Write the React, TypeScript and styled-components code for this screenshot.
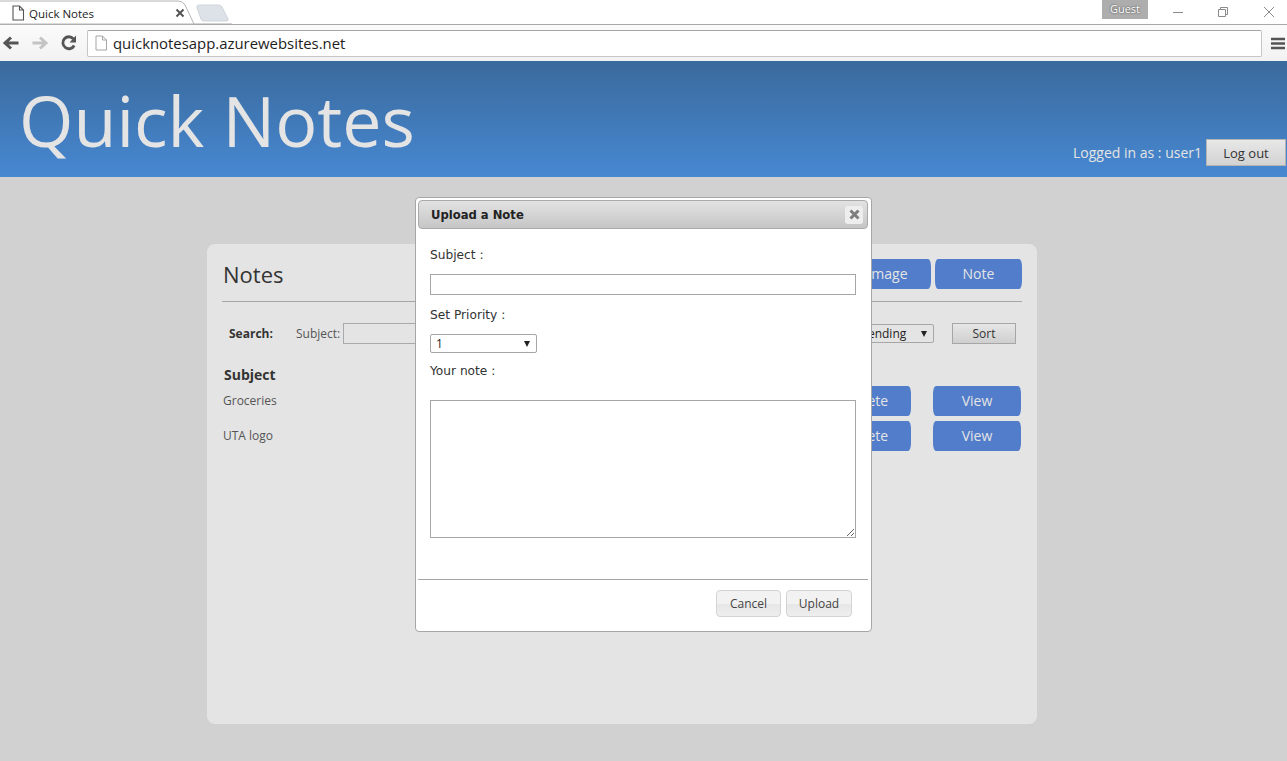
import React from 'react';
import styled, { createGlobalStyle } from 'styled-components';

const GlobalStyle = createGlobalStyle`
  html, body {
    margin: 0;
    padding: 0;
    height: 100%;
    background: #d1d1d1;
    overflow: hidden;
    font-family: "Open Sans", "Liberation Sans", sans-serif;
  }
  * { box-sizing: border-box; }
`;

const App = (): JSX.Element => {
  return (
    <Page>
      <GlobalStyle />
      <BrowserChrome>
        <TabStrip>
          <TabShape width="232" height="25" viewBox="0 0 232 25">
            <path d="M0 24 H194 L185 5 Q183 1 178 1 H0" fill="#fff" stroke="#b4b4b4" />
            <path d="M194 24 H1287" stroke="#a8a8a8" fill="none" />
            <path d="M203 21 H226 Q229 21 228 19 L222 7 Q221 5 218 5 H200 Q196 5 197 8 L201 19 Q202 21 203 21Z" fill="#dde1e8" stroke="#cfd3da" />
          </TabShape>
          <Tab>
            <PageIcon width="14" height="16" viewBox="0 0 14 16">
              <path d="M2 1 H8.5 L12.5 5 V15 H2 Z M8.5 1 V5 H12.5" fill="#fff" stroke="#555" strokeWidth="1.1" />
            </PageIcon>
            <TabTitle>Quick Notes</TabTitle>
            <TabClose width="10" height="10" viewBox="0 0 10 10">
              <path d="M1.5 1.5 L8.5 8.5 M8.5 1.5 L1.5 8.5" stroke="#555" strokeWidth="2" />
            </TabClose>
          </Tab>
          <WindowControls>
            <GuestBadge>Guest</GuestBadge>
            <WindowButton>
              <svg width="12" height="12" viewBox="0 0 12 12">
                <path d="M1 6.5 H11" stroke="#8a8a8a" />
              </svg>
            </WindowButton>
            <WindowButton>
              <svg width="12" height="12" viewBox="0 0 12 12">
                <path d="M1.5 3.5 H8.5 V10.5 H1.5 Z M3.5 3.5 V1.5 H10.5 V8.5 H8.5" fill="none" stroke="#8a8a8a" />
              </svg>
            </WindowButton>
            <WindowButton>
              <svg width="12" height="12" viewBox="0 0 12 12">
                <path d="M1 1 L11 11 M11 1 L1 11" stroke="#8a8a8a" />
              </svg>
            </WindowButton>
          </WindowControls>
        </TabStrip>
        <Toolbar>
          <NavIcon width="18" height="16" viewBox="0 0 18 16">
            <path d="M16.5 8 H4 M9 2.5 L3 8 L9 13.5" fill="none" stroke="#555" strokeWidth="3" />
          </NavIcon>
          <NavIcon width="18" height="16" viewBox="0 0 18 16">
            <path d="M1.5 8 H14 M9 2.5 L15 8 L9 13.5" fill="none" stroke="#c4c4c4" strokeWidth="3" />
          </NavIcon>
          <NavIcon width="18" height="18" viewBox="0 0 18 18">
            <path d="M14.2 11.5 A6 6 0 1 1 13.4 4.8" fill="none" stroke="#555" strokeWidth="2.8" />
            <path d="M16 1.5 V8.5 H9.5 Z" fill="#555" />
          </NavIcon>
          <Omnibox>
            <svg width="14" height="16" viewBox="0 0 14 16">
              <path d="M2 1 H8.5 L12.5 5 V15 H2 Z M8.5 1 V5 H12.5" fill="#fff" stroke="#a5a5a5" />
            </svg>
            <UrlText>quicknotesapp.azurewebsites.net</UrlText>
          </Omnibox>
          <MenuIcon width="14" height="13" viewBox="0 0 14 13">
            <path d="M0 2 H14 M0 6.5 H14 M0 11 H14" stroke="#555" strokeWidth="2.4" />
          </MenuIcon>
        </Toolbar>
      </BrowserChrome>

      <SiteHeader>
        <SiteTitle>Quick Notes</SiteTitle>
        <UserArea>
          <UserLabel>Logged in as : user1</UserLabel>
          <LogoutButton>Log out</LogoutButton>
        </UserArea>
      </SiteHeader>

      <Main>
        <Panel>
          <PanelHead>
            <PanelTitle>Notes</PanelTitle>
            <HeadActions>
              <BlueButton $width={87}>Image</BlueButton>
              <BlueButton $width={87}>Note</BlueButton>
            </HeadActions>
          </PanelHead>
          <SearchRow>
            <SearchLabel>Search:</SearchLabel>
            <SubjectLabel>Subject:</SubjectLabel>
            <SearchInput />
            <SortSelect>
              <SelectText>Descending</SelectText>
            </SortSelect>
            <SortButton>Sort</SortButton>
          </SearchRow>
          <ColumnHeading>Subject</ColumnHeading>
          {['Groceries', 'UTA logo'].map((subject) => (
            <NoteRow key={subject}>
              <NoteSubject>{subject}</NoteSubject>
              <BlueButton $width={88}>Delete</BlueButton>
              <BlueButton $width={88}>View</BlueButton>
            </NoteRow>
          ))}
        </Panel>
      </Main>

      <Dialog>
        <DialogBar>
          <DialogTitle>Upload a Note</DialogTitle>
          <DialogClose>
            <svg width="11" height="11" viewBox="0 0 11 11">
              <path d="M1.5 1.5 L9.5 9.5 M9.5 1.5 L1.5 9.5" stroke="#7d7d7d" strokeWidth="3" />
            </svg>
          </DialogClose>
        </DialogBar>
        <DialogBody>
          <FieldLabel>Subject :</FieldLabel>
          <TextField />
          <FieldLabel>Set Priority :</FieldLabel>
          <PrioritySelect>
            <SelectText>1</SelectText>
          </PrioritySelect>
          <FieldLabel>Your note :</FieldLabel>
          <NoteArea />
        </DialogBody>
        <DialogFooter>
          <FooterButton $width={65}>Cancel</FooterButton>
          <FooterButton $width={66}>Upload</FooterButton>
        </DialogFooter>
      </Dialog>
    </Page>
  );
};

export default App;

const Page = styled.div`
  position: relative;
  width: 1287px;
  height: 761px;
  overflow: hidden;
  background: #d1d1d1;
`;

const BrowserChrome = styled.div`
  height: 61px;
  background: #fff;
`;

const TabStrip = styled.div`
  position: relative;
  display: flex;
  height: 25px;
  border-bottom: 1px solid #a8a8a8;
`;

const TabShape = styled.svg`
  position: absolute;
  left: 0;
  top: 0;
`;

const Tab = styled.div`
  position: relative;
  display: flex;
  align-items: center;
  width: 186px;
  height: 24px;
  padding: 2px 0 0 11px;
`;

const PageIcon = styled.svg`
  flex: none;
`;

const TabTitle = styled.span`
  flex: 1;
  margin-left: 4px;
  font: 11.5px "Open Sans", sans-serif;
  color: #222;
`;

const TabClose = styled.svg`
  flex: none;
  margin-right: 1px;
`;

const WindowControls = styled.div`
  display: flex;
  align-items: flex-start;
  margin-left: auto;
  height: 24px;
`;

const GuestBadge = styled.div`
  width: 46px;
  height: 19px;
  margin-right: 7px;
  background: #adadad;
  color: #fff;
  font: 11px/17px "Open Sans", sans-serif;
  text-align: center;
  text-shadow: 0 0 2px #333;
`;

const WindowButton = styled.div`
  display: flex;
  align-items: center;
  justify-content: center;
  width: 45px;
  height: 24px;
  &:last-child {
    width: 36px;
    margin-left: 6px;
  }
`;

const Toolbar = styled.div`
  display: flex;
  align-items: center;
  height: 36px;
  padding: 0 0 0 2px;
  background: linear-gradient(#fbfbfb, #f2f2f2);
`;

const NavIcon = styled.svg`
  flex: none;
  margin-right: 11px;
`;

const Omnibox = styled.div`
  display: flex;
  align-items: center;
  gap: 5px;
  width: 1175px;
  height: 27px;
  margin-left: -2px;
  padding-left: 6px;
  background: #fff;
  border: 1px solid #c6c6c6;
  border-top-color: #a6a6a6;
  border-radius: 2px;
`;

const UrlText = styled.span`
  font: 14.9px "Open Sans", sans-serif;
  color: #1d1d1d;
`;

const MenuIcon = styled.svg`
  margin-left: 9px;
`;

const SiteHeader = styled.header`
  display: flex;
  align-items: flex-start;
  justify-content: space-between;
  height: 116px;
  padding: 0 1px 0 19px;
  background: linear-gradient(#3a6a9c, #4788d2);
`;

const SiteTitle = styled.h1`
  margin: 11px 0 0;
  font: 400 70px/96px "Open Sans", sans-serif;
  color: #e4e4e4;
`;

const UserArea = styled.div`
  display: flex;
  align-items: center;
  gap: 4px;
  margin-top: 78px;
`;

const UserLabel = styled.span`
  font: 14px "Open Sans", sans-serif;
  color: #e4e4e4;
`;

const LogoutButton = styled.button`
  width: 80px;
  height: 27px;
  padding: 0;
  border: 1px solid #b4b4b4;
  background: linear-gradient(#e8e8e8, #d2d2d2);
  font: 13px "Open Sans", sans-serif;
  color: #333;
`;

const Main = styled.main`
  padding: 67px 0 0 207px;
`;

const Panel = styled.section`
  width: 830px;
  height: 480px;
  padding: 15px 15px 0;
  background: #e4e4e4;
  border-radius: 8px;
`;

const PanelHead = styled.div`
  display: flex;
  align-items: flex-start;
  justify-content: space-between;
  height: 43px;
  border-bottom: 1px solid #a6a6a6;
`;

const PanelTitle = styled.h2`
  margin: 0 0 0 1px;
  font: 400 22px/30px "Open Sans", sans-serif;
  color: #333;
`;

const HeadActions = styled.div`
  display: flex;
  gap: 4px;
`;

const BlueButton = styled.button<{ $width: number }>`
  flex: none;
  width: ${({ $width }) => $width}px;
  height: 30px;
  padding: 0 0 2px;
  border: none;
  border-radius: 3px / 8px;
  background: #527dcb;
  font: 14px "Open Sans", sans-serif;
  color: #e4e4e4;
`;

const SearchRow = styled.div`
  display: flex;
  align-items: center;
  height: 21px;
  margin-top: 21px;
  padding-left: 7px;
`;

const SearchLabel = styled.span`
  width: 67px;
  font: 700 12px "Open Sans", sans-serif;
  color: #333;
`;

const SubjectLabel = styled.span`
  width: 47px;
  font: 12px "Open Sans", sans-serif;
  color: #555;
`;

const SearchInput = styled.input`
  width: 140px;
  height: 21px;
  padding: 0;
  background: #e4e4e4;
  border: 1px solid #a9a9a9;
`;

const SelectBox = styled.div`
  position: relative;
  display: flex;
  align-items: center;
  border: 1px solid #a6a6a6;
  border-radius: 2px;
  &::after {
    content: '';
    position: absolute;
    right: 6px;
    top: 50%;
    margin-top: -3px;
    border-left: 3.5px solid transparent;
    border-right: 3.5px solid transparent;
    border-top: 6px solid #222;
  }
`;

const SortSelect = styled(SelectBox)`
  width: 110px;
  height: 19px;
  margin-left: 341px;
  padding-left: 16px;
`;

const SelectText = styled.span`
  font: 12px "Open Sans", sans-serif;
  color: #222;
`;

const SortButton = styled.button`
  width: 64px;
  height: 21px;
  margin-left: 18px;
  padding: 0;
  border: 1px solid #a6a6a6;
  background: linear-gradient(#e6e6e6, #cfcfcf);
  font: 12px "Open Sans", sans-serif;
  color: #333;
`;

const ColumnHeading = styled.div`
  margin: 21px 0 1px 2px;
  font: 700 14px/20px "Open Sans", sans-serif;
  color: #333;
`;

const NoteRow = styled.div`
  display: flex;
  align-items: center;
  gap: 22px;
  height: 35px;
  padding: 0 1px 5px 1px;
`;

const NoteSubject = styled.span`
  flex: 1;
  margin-top: -2px;
  font: 12px "Open Sans", sans-serif;
  color: #555;
`;

const Dialog = styled.div`
  position: absolute;
  left: 415px;
  top: 197px;
  width: 457px;
  height: 435px;
  padding: 2px 3px 2px 2px;
  background: #fff;
  border: 1px solid #a6a6a6;
  border-radius: 4px;
`;

const DialogBar = styled.div`
  display: flex;
  align-items: center;
  justify-content: space-between;
  height: 29px;
  padding: 0 4px 0 12px;
  background: linear-gradient(#e2e2e2, #c6c6c6);
  border: 1px solid #a9a9a9;
  border-radius: 4px;
`;

const DialogTitle = styled.span`
  font: 700 11.6px "DejaVu Sans", sans-serif;
  color: #222;
`;

const DialogClose = styled.div`
  display: flex;
  align-items: center;
  justify-content: center;
  width: 18px;
  height: 18px;
  background: #eeeeee;
  border-radius: 3px;
`;

const DialogBody = styled.div`
  display: flex;
  flex-direction: column;
  align-items: flex-start;
  height: 350px;
  padding: 17px 12px 0 12px;
`;

const FieldLabel = styled.label`
  height: 18px;
  font: 12.2px/18px "DejaVu Sans", sans-serif;
  color: #333;
`;

const TextField = styled.input`
  width: 426px;
  height: 21px;
  margin: 10px 0 11px;
  padding: 0;
  background: #fff;
  border: 1px solid #a6a6a6;
`;

const PrioritySelect = styled(SelectBox)`
  width: 107px;
  height: 19px;
  margin: 10px 0 9px;
  padding-left: 5px;
`;

const NoteArea = styled.textarea`
  width: 426px;
  height: 138px;
  margin-top: 20px;
  padding: 0;
  background: #fff;
  border: 1px solid #a6a6a6;
`;

const DialogFooter = styled.div`
  display: flex;
  justify-content: flex-end;
  gap: 5px;
  height: 51px;
  padding: 10px 16px 0 0;
  border-top: 1px solid #a6a6a6;
`;

const FooterButton = styled.button<{ $width: number }>`
  width: ${({ $width }) => $width}px;
  height: 27px;
  padding: 0;
  border: 1px solid #d3d3d3;
  border-radius: 4px;
  background: linear-gradient(#f2f2f2 50%, #e6e6e6 50%, #eeeeee);
  font: 12px "Open Sans", sans-serif;
  color: #444;
`;
